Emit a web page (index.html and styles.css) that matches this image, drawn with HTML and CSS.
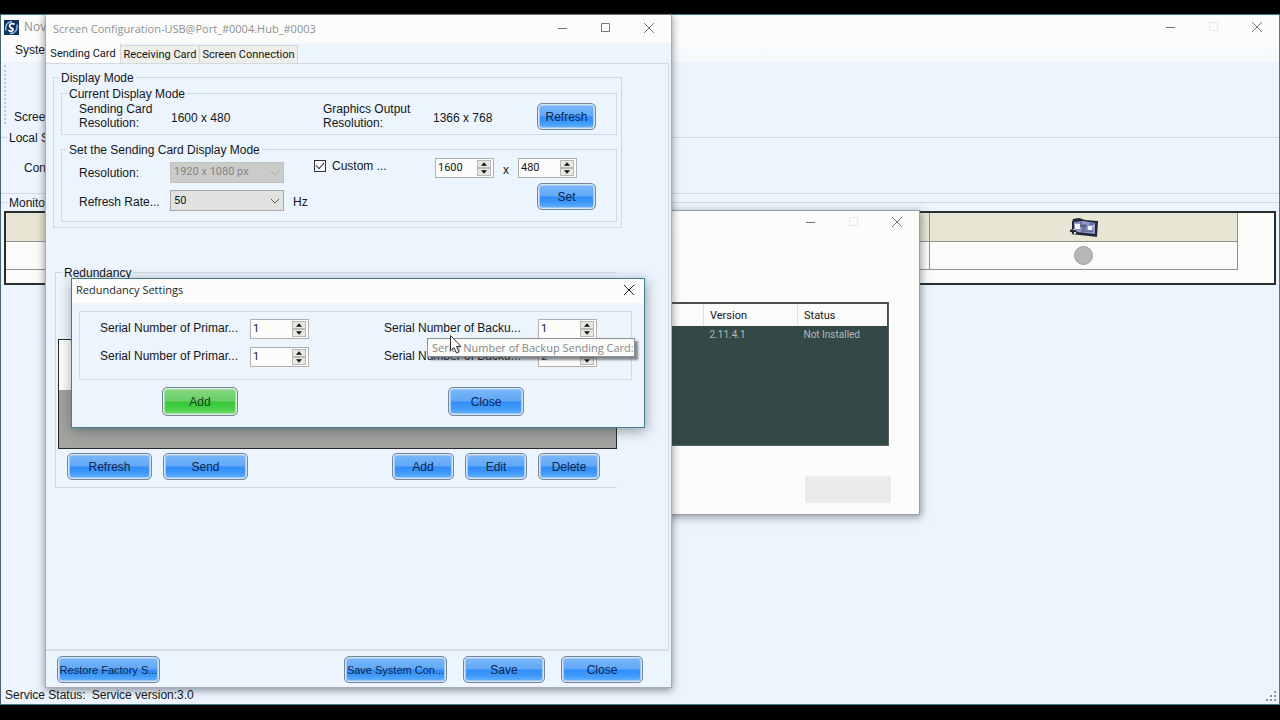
FILE: index.html
```html
<!DOCTYPE html>
<html lang="en">
<head>
<meta charset="utf-8">
<title>Screen Configuration</title>
<link rel="stylesheet" href="styles.css">
</head>
<body>
<svg class="defs" aria-hidden="true">
  <symbol id="min" viewBox="0 0 10 10"><path d="M0 5.5H9" stroke="currentColor" fill="none"/></symbol>
  <symbol id="max" viewBox="0 0 10 10"><path d="M.5.5H8.500V8.500H.5Z" stroke="currentColor" fill="none"/></symbol>
  <symbol id="close" viewBox="0 0 10 10"><path d="M0 0L10 10M10 0L0 10" stroke="currentColor" fill="none"/></symbol>
  <symbol id="chev" viewBox="0 0 10 6"><path d="M1 1L5 5L9 1" stroke="currentColor" fill="none"/></symbol>
  <symbol id="up" viewBox="0 0 7 4"><path d="M0 4L3.500 0L7 4Z" fill="currentColor"/></symbol>
  <symbol id="down" viewBox="0 0 7 4"><path d="M0 0L3.500 4L7 0Z" fill="currentColor"/></symbol>
</svg>

<main class="main">
  <header class="titlebar main-title">
    <svg class="logo" viewBox="0 0 15 15"><rect width="15" height="15" fill="#123460"/><path d="M2 10.500C.5 5 4 2 8 1.500M6 13.500C11 13.500 14 10 13 4.500" stroke="#9cc4ea" stroke-width="1.300" fill="none"/><path d="M10.500 4.500C8 2.500 4.500 4.500 6 6.800S10 8.500 8.800 10.300S5.500 11.200 4.500 10" stroke="#fff" stroke-width="1.800" fill="none"/></svg>
    <span class="title-text">Nov</span>
    <span class="winbtns">
      <button aria-label="Minimize"><svg class="wi"><use href="#min"/></svg></button>
      <button aria-label="Maximize" disabled><svg class="wi"><use href="#max"/></svg></button>
      <button aria-label="Close"><svg class="wi"><use href="#close"/></svg></button>
    </span>
  </header>
  <nav class="menubar">Syste</nav>
  <div class="toolbar"><i class="grip"></i><span>Scree</span></div>
  <fieldset class="local"><legend>Local S</legend><span>Con</span></fieldset>
  <fieldset class="monitor"><legend>Monitor</legend>
    <div class="monitor-box">
      <table class="monitor-table">
        <tr><th></th><th></th><th></th><th><svg class="card" viewBox="0 0 30 20"><path d="M4 1L10 0L16 2L29 3L28 19L20 18L1 16V12L3 11V4Z" fill="#242735"/><path d="M5 4L14 3L26 5V16L17 15L8 14L5 10Z" fill="#9298c8"/><path d="M6 6h5v5H6zM19 8h4v4h-4z" fill="#f4f5fc"/><path d="M12 4V9M14 6V12M16 6V12M11 8H18M12 13H24M20 6H25M8 3V5" stroke="#494f7c"/><path d="M1 14h2v2H1zM5 14h2v2H5zM4 11h2v1H4zM24 7h1v2h-1z" fill="#d8daed"/></svg></th></tr>
        <tr><td></td><td></td><td></td><td><i class="lamp"></i></td></tr>
      </table>
    </div>
  </fieldset>
  <footer class="status"><span>Service Status:</span><span>Service version:3.0</span>
    <svg class="sizegrip" viewBox="0 0 11 11"><path d="M8 0h2v2H8zM4 4h2v2H4zM8 4h2v2H8zM0 8h2v2H0zM4 8h2v2H4zM8 8h2v2H8z" fill="#8d969b"/></svg>
  </footer>
</main>

<section class="window plugin">
  <header class="titlebar plugin-title">
    <span class="winbtns">
      <button aria-label="Minimize"><svg class="wi"><use href="#min"/></svg></button>
      <button aria-label="Maximize" disabled><svg class="wi"><use href="#max"/></svg></button>
      <button aria-label="Close"><svg class="wi"><use href="#close"/></svg></button>
    </span>
  </header>
  <div class="list">
    <table>
      <tr><th></th><th class="c-version">Version</th><th class="c-status">Status</th></tr>
      <tr><td></td><td>2.11.4.1</td><td>Not Installed</td></tr>
    </table>
  </div>
  <button class="blank" aria-label="Action" disabled></button>
</section>

<section class="window config">
  <header class="titlebar config-title">
    <span class="title-text">Screen Configuration-USB@Port_#0004.Hub_#0003</span>
    <span class="winbtns">
      <button aria-label="Minimize"><svg class="wi"><use href="#min"/></svg></button>
      <button aria-label="Maximize"><svg class="wi"><use href="#max"/></svg></button>
      <button aria-label="Close"><svg class="wi"><use href="#close"/></svg></button>
    </span>
  </header>
  <div class="tabs" role="tablist">
    <button class="tab active" role="tab" aria-selected="true">Sending Card</button>
    <button class="tab" role="tab">Receiving Card</button>
    <button class="tab wide" role="tab">Screen Connection</button>
  </div>
  <div class="page">
    <fieldset class="display"><legend>Display Mode</legend>
      <fieldset class="inner current"><legend>Current Display Mode</legend>
        <div class="cur-row">
          <span>Sending Card<br>Resolution:</span><span class="val">1600 x 480</span>
          <span>Graphics Output<br>Resolution:</span><span class="val">1366 x 768</span>
          <button class="btn">Refresh</button>
        </div>
      </fieldset>
      <fieldset class="inner setmode"><legend>Set the Sending Card Display Mode</legend>
        <div class="set-row">
          <label class="lab" for="res">Resolution:</label>
          <span class="combo"><select id="res" disabled><option>1920 x 1080 px</option></select><svg class="chev off"><use href="#chev"/></svg></span>
          <div class="custom">
            <label class="check"><input type="checkbox" checked>Custom ...</label>
            <span class="spin"><input type="text" value="1600" aria-label="Width"><span class="arrows"><button aria-label="Up"><svg><use href="#up"/></svg></button><button aria-label="Down"><svg><use href="#down"/></svg></button></span></span>
            <span class="times">x</span>
            <span class="spin"><input type="text" value="480" aria-label="Height"><span class="arrows"><button aria-label="Up"><svg><use href="#up"/></svg></button><button aria-label="Down"><svg><use href="#down"/></svg></button></span></span>
          </div>
        </div>
        <div class="rate-row">
          <label class="lab" for="rate">Refresh Rate...</label>
          <span class="combo"><select id="rate"><option>50</option></select><svg class="chev"><use href="#chev"/></svg></span>
          <span class="hz">Hz</span>
          <button class="btn">Set</button>
        </div>
      </fieldset>
    </fieldset>
    <fieldset class="redundancy"><legend>Redundancy</legend>
      <div class="grid-box"><div class="grid-head"></div></div>
      <div class="red-btns">
        <button class="btn w85">Refresh</button><button class="btn w85">Send</button>
        <span class="push"></span>
        <button class="btn w62">Add</button><button class="btn w62">Edit</button><button class="btn w62">Delete</button>
      </div>
    </fieldset>
  </div>
  <footer class="config-foot">
    <button class="btn long">Restore Factory S...</button>
    <span class="push"></span>
    <button class="btn long">Save System Con...</button>
    <button class="btn w82">Save</button>
    <button class="btn w82">Close</button>
  </footer>
</section>

<section class="window dialog" role="dialog" aria-label="Redundancy Settings">
  <header class="titlebar dialog-title">
    <span class="title-text">Redundancy Settings</span>
    <span class="winbtns"><button aria-label="Close"><svg class="wi"><use href="#close"/></svg></button></span>
  </header>
  <div class="serials">
    <label for="p1">Serial Number of Primar...</label>
    <span class="spin"><input id="p1" type="text" value="1"><span class="arrows"><button aria-label="Up"><svg><use href="#up"/></svg></button><button aria-label="Down"><svg><use href="#down"/></svg></button></span></span>
    <label for="b1">Serial Number of Backu...</label>
    <span class="spin"><input id="b1" type="text" value="1"><span class="arrows"><button aria-label="Up"><svg><use href="#up"/></svg></button><button aria-label="Down"><svg><use href="#down"/></svg></button></span></span>
    <label for="p2">Serial Number of Primar...</label>
    <span class="spin"><input id="p2" type="text" value="1"><span class="arrows"><button aria-label="Up"><svg><use href="#up"/></svg></button><button aria-label="Down"><svg><use href="#down"/></svg></button></span></span>
    <label for="b2">Serial Number of Backu...</label>
    <span class="spin"><input id="b2" type="text" value="2"><span class="arrows"><button aria-label="Up"><svg><use href="#up"/></svg></button><button aria-label="Down"><svg><use href="#down"/></svg></button></span></span>
  </div>
  <div class="dialog-btns">
    <button class="btn green">Add</button>
    <button class="btn">Close</button>
  </div>
</section>
<div class="tooltip" role="tooltip">Serial Number of Backup Sending Card:</div>
<svg class="cursor" viewBox="0 0 12 19"><path d="M.5.5V15.500L4 12.500L6.500 18L9 17L6.500 11.500H11Z" fill="#fff" stroke="#333"/></svg>
</body>
</html>
```
FILE: styles.css
```css
* { box-sizing: border-box; }
body {
  margin: 0;
  min-height: 100vh;
  padding: 14px 0 15px;
  display: flex;
  flex-direction: column;
  background: #000;
  color: #14161a;
  font: 12px/14px "Liberation Sans", Arial, sans-serif;
  position: relative;
  overflow: hidden;
}
.defs { position: absolute; width: 0; height: 0; }
button, input, select { font: inherit; color: inherit; margin: 0; padding: 0; }
fieldset { margin: 0; padding: 0; border: 1px solid #ced9e4; min-width: 0; }
legend { padding: 0 2px; height: 16px; line-height: 18px; }
.push { flex: 1; }

/* Title bars */
.titlebar { display: flex; align-items: center; background: #fcfdfa; }
.title-text { font-family: "Open Sans", sans-serif; font-size: 11px; color: #8f9192; white-space: nowrap; }
.winbtns { display: flex; margin-left: auto; color: #777; }
.winbtns button { width: 43px; height: 20px; border: 0; background: none; color: inherit; display: flex; align-items: center; justify-content: center; }
.winbtns button:disabled { color: #e8e9e7; }
.wi { width: 10px; height: 10px; overflow: visible; }

/* Main window */
.main { flex: 1; display: flex; flex-direction: column; background: #ecf4fd; border: 1px solid #3d7f88; border-left-color: #48636e; }
.main-title { height: 24px; padding: 0 1px 0 3px; }
.logo { width: 15px; height: 15px; margin-right: 5px; }
.main-title .title-text { font-size: 12px; }
.menubar { height: 23px; padding: 4px 0 0 14px; background: linear-gradient(#fcfdfc, #f5f9fd); }
.toolbar { height: 67px; display: flex; align-items: flex-end; padding: 3px 0 5px 3px; }
.grip { width: 10px; align-self: stretch; border-left: 2px dotted #bcc6d0; }
.local { height: 65px; border-width: 1px 0; padding: 16px 0 0 23px; }
.local legend { margin-left: -17px; }
.monitor { border-width: 1px 0 0; padding: 1px 3px 0; }
.monitor legend { margin-left: 3px; }
.monitor-box { height: 74px; border: 2px solid #292d2d; background: #fbfcf9; }
.monitor-table { width: calc(100% - 36px); border-collapse: collapse; table-layout: fixed; }
.monitor-table th, .monitor-table td { height: 28px; padding: 0; border: 1px solid #8f918d; border-top: 0; text-align: center; vertical-align: middle; }
.monitor-table tr > :first-child { border-left: 0; }
.monitor-table th { padding-top: 2px; background: #e8e5d4; }
.card { display: block; width: 30px; height: 20px; margin: 0 auto; }
.lamp { display: block; width: 19px; height: 19px; margin: 0 auto; border: 1px solid #9b9e9b; border-radius: 50%; background: #b5b8b5; }
.status { margin-top: auto; height: 16px; display: flex; gap: 6px; padding: 0 2px 0 4px; }
.sizegrip { width: 11px; height: 11px; margin: 3px 0 0 auto; }

.window { position: absolute; display: flex; flex-direction: column; }

/* Plugin window */
.plugin { left: 400px; top: 210px; width: 520px; height: 305px; background: #fbfcf9; border: 1px solid #999fa3; box-shadow: 1px 2px 8px rgba(40, 50, 60, .5); }
.plugin-title { height: 22px; }
.plugin-title .winbtns { padding-right: 1px; }
.list { height: 144px; margin: 69px 30px 0; background: #354848; border: 1px solid #566264; border-top: 2px solid #4d4c50; border-left: 0; font: 11px/14px Roboto, sans-serif; }
.list table { width: 100%; border-collapse: collapse; table-layout: fixed; }
.list th { height: 22px; padding: 2px 6px 0; background: #fbfcf9; font-weight: 400; text-align: left; border-right: 1px solid #e0e1df; }
.list th:last-child { border-right-color: #4d4c50; }
.list td { height: 18px; padding: 0 6px; color: #b1b9b8; font-size: 10px; }
.c-version { width: 94px; }
.c-status { width: 90px; }
.blank { align-self: flex-end; width: 86px; height: 27px; margin: 30px 28px 0; border: 0; background: #ebebe9; }

/* Configuration window */
.config { left: 45px; top: 14px; width: 627px; height: 674px; background: #ecf4fd; border: 1px solid #a5adb2; border-top-color: #6d7476; box-shadow: 0 2px 8px rgba(40, 50, 60, .55); }
.config-title { height: 28px; padding-left: 7px; }
.config-title .winbtns { padding: 0 1px 2px 0; }
.tabs { display: flex; align-items: flex-end; height: 20px; font: 11px/14px Roboto, sans-serif; }
.tab { width: 79px; height: 18px; padding-top: 1px; border: 1px solid #d4d5d4; border-left: 0; border-bottom: 0; background: #eeeeeb; white-space: nowrap; }
.tab.active { width: 75px; height: 20px; background: #fcfdfa; border-top: 0; }
.tab.wide { width: 98px; }
.page { flex: 1; margin-right: 2px; padding: 5px 0 0 7px; border: 1px solid #d3dbe2; border-left: 0; border-bottom: 2px solid #dcdfe0; }
.display { width: 569px; height: 159px; padding: 0 4px 0 7px; }
.display > legend { margin-left: -2px; }
.inner { padding-left: 17px; }
.inner legend { margin-left: -12px; }
.current { height: 50px; }
.cur-row { display: grid; grid-template-columns: 92px 152px 110px 104px 59px; padding-top: 1px; }
.cur-row .val { padding-top: 9px; }
.cur-row .btn { margin-top: 1px; }
.setmode { margin-top: 6px; height: 81px; }
.set-row { display: flex; align-items: center; height: 26px; padding-top: 4px; }
.rate-row { display: flex; align-items: flex-end; height: 28px; padding-right: 20px; }
.lab { width: 91px; padding-top: 2px; }
.rate-row .lab, .hz { padding-bottom: 2px; }
.hz { margin-left: 9px; }
.rate-row .btn { width: 59px; margin-left: auto; align-self: flex-start; }
.combo { position: relative; width: 114px; height: 21px; }
.combo select { appearance: none; display: block; width: 100%; height: 21px; padding: 0 20px 0 3px; border: 1px solid #a7aaa8; border-radius: 0; background: #e2e3e0; font: 11px/14px Roboto, sans-serif; }
.combo select:disabled { background: #cbccca; border-color: #c0c2c0; color: #858784; opacity: 1; }
.chev { position: absolute; right: 4px; top: 8px; width: 10px; height: 6px; color: #555; pointer-events: none; }
.chev.off { color: #aaa; }
.custom { display: flex; align-self: flex-start; align-items: center; height: 20px; margin: -3px 0 0 30px; }
.check { display: flex; align-items: center; align-self: flex-start; gap: 6px; width: 121px; height: 16px; }
.check input { appearance: none; width: 12px; height: 12px; border: 1px solid #333; background: #fcfdfc; display: grid; place-items: center; }
.check input::after { content: ""; width: 7px; height: 4px; border: solid #333; border-width: 0 0 1px 1px; transform: rotate(-48deg); margin-bottom: 3px; }
.times { width: 24px; text-align: center; padding-top: 3px; }

/* Number boxes */
.spin { display: flex; width: 59px; height: 20px; border: 1px solid #aeb0ae; background: #fcfdfb; padding: 1px 2px; }
.spin input { flex: 1; min-width: 0; width: 0; border: 0; background: none; font: 11px/14px Roboto, sans-serif; outline: 0; }
.arrows { display: flex; flex-direction: column; width: 14px; }
.arrows button { flex: 1; min-height: 0; border: 1px solid #b8b9b7; background: #e7e7e4; display: flex; align-items: center; justify-content: center; color: #111; }
.arrows svg { width: 6px; height: 4px; }

/* Glossy buttons */
.btn { width: 59px; height: 27px; flex: none; border: 1px solid #74879a; border-radius: 5px; color: #0c2550; white-space: nowrap; padding: 0;
  background: linear-gradient(#7db8f8, #5fa8f7 48%, #318df8 52%, #3f9afa 75%, #6ab7fc); box-shadow: inset 0 0 0 1px #d5e5f5, inset 0 0 0 2px #a0c8f2; }
.btn.green { color: #14401a; background: linear-gradient(#87d885, #69cf67 48%, #37c737 52%, #46cf46 75%, #78de74); box-shadow: inset 0 0 0 1px #daf0dc, inset 0 0 0 2px #a9dfaa; }
.w62 { width: 62px; }
.w82 { width: 82px; }
.w85 { width: 85px; }
.btn.long { width: 103px; font-size: 11px; }

.redundancy { width: 562px; height: 224px; margin: 36px 0 0 2px; border-right: 0; padding-left: 1px; }
.redundancy legend { margin-left: 5px; }
.grid-box { height: 110px; margin: 59px 0 0 1px; border: 1px solid #26292a; background: linear-gradient(#9b9c98, #a3a5a0); }
.grid-head { height: 50px; background: #fbfcf9; }
.red-btns { display: flex; gap: 11px; padding: 4px 17px 0 10px; }
.red-btns .push { margin-left: -22px; }
.config-foot { display: flex; gap: 16px; height: 36px; padding: 5px 28px 0 11px; }
.config-foot .push { margin-left: -16px; }

/* Redundancy dialog */
.dialog { left: 71px; top: 278px; width: 574px; height: 150px; background: #ecf4fd; border: 1px solid #3f7f91; box-shadow: 1px 3px 12px rgba(40, 50, 60, .45); }
.dialog-title { height: 24px; padding: 0 0 2px 4px; }
.dialog-title .title-text { color: #25282a; }
.dialog-title .winbtns { color: #222; margin-right: -6px; }
.serials { display: grid; grid-template-columns: 150px 134px 154px 59px; grid-template-rows: 20px 20px; row-gap: 8px; margin: 8px 12px 0 7px; height: 69px; padding: 7px 0 0 20px; border: 1px solid #cfdae4; }
.serials label { line-height: 18px; white-space: nowrap; }
.dialog-btns { display: flex; justify-content: space-between; padding: 7px 120px 0 90px; }
.dialog-btns .btn { width: 76px; height: 29px; }

.tooltip { position: absolute; left: 427px; top: 338px; width: 208px; height: 19px; padding: 2px 4px; border: 1px solid #8c9092; background: #fbfcfa; box-shadow: 3px 3px 2px rgba(60, 65, 70, .6); font-family: "Open Sans", sans-serif; font-size: 11px; color: #858788; white-space: nowrap; }
.cursor { position: absolute; left: 450px; top: 335px; width: 12px; height: 19px; }
```
